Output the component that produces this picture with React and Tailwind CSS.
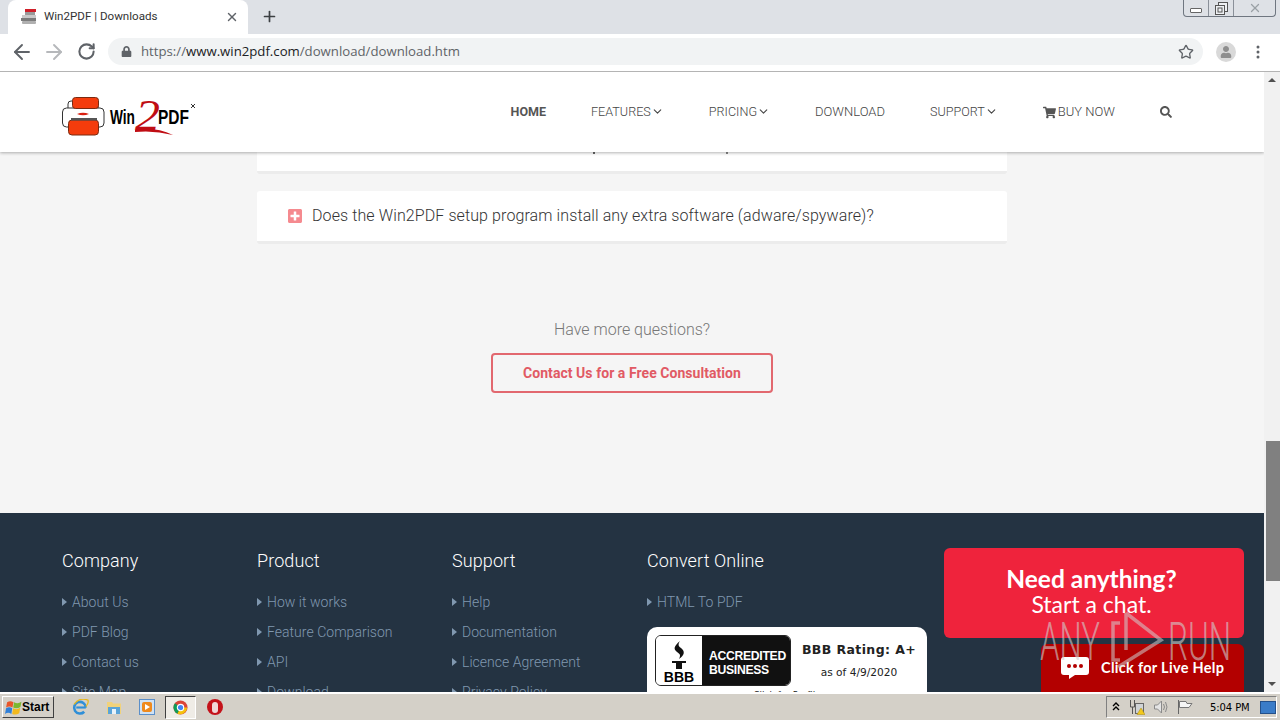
import { ArrowLeft, ArrowRight, RotateCw, Star, X, Plus, ChevronDown } from "lucide-react";
import { FaShoppingCart, FaSearch, FaPlusSquare, FaLock, FaUser } from "react-icons/fa";

const roboto = "font-['Roboto',sans-serif]";

const navItems = [
  { label: "HOME", active: true },
  { label: "FEATURES", caret: true },
  { label: "PRICING", caret: true },
  { label: "DOWNLOAD", wide: true },
  { label: "SUPPORT", caret: true },
];

const footerCols = [
  { title: "Company", links: ["About Us", "PDF Blog", "Contact us", "Site Map"] },
  { title: "Product", links: ["How it works", "Feature Comparison", "API", "Download"] },
  { title: "Support", links: ["Help", "Documentation", "Licence Agreement", "Privacy Policy"] },
];

const Logo = () => (
  <svg width="135" height="42" viewBox="0 0 135 42" className="shrink-0">
    {/* printer */}
    <rect x="6" y="4" width="30" height="20" rx="3" fill="#fff" stroke="#333" />
    <rect x="0.5" y="11" width="41.5" height="19" rx="4" fill="#fff" stroke="#333" />
    <rect x="10.5" y="0.5" width="26" height="11" rx="3" fill="#f43c0c" stroke="#7a2a10" />
    <rect x="6.5" y="23" width="30" height="15" rx="3.5" fill="#f43c0c" stroke="#7a2a10" />
    <rect x="9" y="21" width="26" height="2.5" fill="#555" />
    <path d="M15 17 Q21 14.5 27 17 Q21 19.5 15 17Z" fill="#d92010" />
    {/* wordmark */}
    <text x="48" y="27" textLength="25" lengthAdjust="spacingAndGlyphs" fontFamily="Liberation Sans" fontWeight="700" fontSize="19.5" fill="#000">Win</text>
    <text x="73" y="33" textLength="25" lengthAdjust="spacingAndGlyphs" fontFamily="Liberation Serif" fontStyle="italic" fontSize="44" fill="#c00d14">2</text>
    <path d="M73 33 Q92 29 111 38 Q92 33 73 35Z" fill="#c00d14" />
    <text x="96" y="27" textLength="31" lengthAdjust="spacingAndGlyphs" fontFamily="Liberation Sans" fontWeight="700" fontSize="19.5" fill="#000">PDF</text>
    <path d="M129 7 L133 11 M133 7 L129 11" stroke="#333" strokeWidth="1" />
  </svg>
);

const LinkCaret = () => (
  <span className="mr-[5px] border-y-[4px] border-l-[5px] border-y-transparent border-l-[#8098b0]" />
);

const FooterColumn = ({ title, links }) => (
  <div className="w-[195px] shrink-0">
    <h4 className="text-[18px] leading-[20px] font-light text-white tracking-[0.1px]">{title}</h4>
    <ul className="mt-[21px] flex flex-col gap-[10px]">
      {links.map((link) => (
        <li key={link} className="flex items-center h-[20px] text-[14px] font-light text-[#8098b0] tracking-[0.03px]">
          <LinkCaret />
          {link}
        </li>
      ))}
    </ul>
  </div>
);

export default function App() {
  return (
    <div className="relative w-[1280px] h-[720px] overflow-hidden flex flex-col bg-white">
      {/* TAB STRIP */}
      <div className="h-[34px] shrink-0 bg-[#dee1e6] flex items-end pl-[8px] relative">
        <div className="w-[240px] h-[34px] bg-white rounded-t-[8px] flex items-center pl-[13px] pr-[9px]">
          <svg width="16" height="16" viewBox="0 0 16 16" className="shrink-0">
            <rect x="4" y="0" width="11" height="3" fill="#d0202a" />
            <rect x="4" y="3" width="10" height="3" fill="#9a9a9a" />
            <rect x="1" y="6" width="14" height="3" fill="#c9c9c9" />
            <rect x="0" y="9" width="15" height="3" fill="#7c7c7c" />
            <rect x="1" y="12" width="14" height="3" rx="1" fill="#b0b0b0" />
          </svg>
          <span className="ml-[7px] text-[11.6px] text-[#333] font-['Roboto',sans-serif]">Win2PDF | Downloads</span>
          <X size={14} strokeWidth={2.4} className="ml-auto text-[#5f6368]" />
        </div>
        <Plus size={17} strokeWidth={2.4} className="ml-[13px] mb-[9px] text-[#3c4043]" />
        {/* window buttons */}
        <div className="absolute top-0 right-[4px] w-[93px] h-[17px] bg-[#dee1e6] border border-t-0 border-[#6f7680] rounded-b-[4px] flex">
          <div className="w-[25px] flex items-end justify-center pb-[3px] border-r border-[#8a9099]">
            <div className="w-[12px] h-[5px] border border-[#666] rounded-[1px] bg-white" />
          </div>
          <div className="w-[25px] flex items-center justify-center border-r border-[#8a9099]">
            <svg width="13" height="13" viewBox="0 0 13 13">
              <rect x="3.5" y="0.5" width="9" height="9" fill="#eef0f3" stroke="#555" />
              <rect x="0.5" y="3.5" width="9" height="9" fill="#eef0f3" stroke="#555" />
              <rect x="3" y="6" width="4" height="4" fill="none" stroke="#555" />
            </svg>
          </div>
          <div className="flex-1 flex items-center justify-center">
            <X size={14} strokeWidth={2.2} className="text-[#9aa0a6]" />
          </div>
        </div>
      </div>

      {/* TOOLBAR */}
      <div className="h-[38px] shrink-0 bg-white border-b border-[#b4b4b4] flex items-center pl-[10px] pb-[2px]">
        <ArrowLeft size={24} strokeWidth={1.9} className="text-[#5f6368]" />
        <ArrowRight size={24} strokeWidth={1.9} className="ml-[8px] text-[#b6b8bb]" />
        <RotateCw size={19} strokeWidth={2.6} className="ml-[11px] text-[#5f6368]" />
        <div className="ml-[12px] w-[1095px] h-[27px] rounded-full bg-[#f1f3f4] flex items-center pl-[13px] pr-[9px]">
          <FaLock size={11} className="text-[#5f6368]" />
          <span className="ml-[9px] text-[13.2px] text-[#5f6368] font-['Open_Sans',sans-serif]">
            https://<span className="text-[#202124]">www.win2pdf.com</span>/download/download.htm
          </span>
          <Star size={16} strokeWidth={2} className="ml-auto text-[#5f6368]" />
        </div>
        <div className="ml-[13px] w-[20px] h-[20px] rounded-full bg-[#d9d9d9] flex items-center justify-center overflow-hidden">
          <FaUser size={12} className="text-[#8e8e8e]" />
        </div>
        <svg width="4" height="14" viewBox="0 0 4 14" className="ml-[20px] text-[#5f6368]">
          <circle cx="2" cy="2" r="1.5" fill="currentColor" />
          <circle cx="2" cy="7" r="1.5" fill="currentColor" />
          <circle cx="2" cy="12" r="1.5" fill="currentColor" />
        </svg>
      </div>

      {/* VIEWPORT */}
      <div className="flex-1 min-h-0 flex">
        <div className={`w-[1264px] flex flex-col overflow-hidden bg-[#f5f5f5] ${roboto}`}>
          {/* SITE HEADER */}
          <header className="relative z-10 h-[80px] shrink-0 bg-white shadow-[0_1px_3px_rgba(0,0,0,0.3)] flex items-center pl-[62px] pt-[12px]">
            <Logo />
            <nav className="ml-auto mr-[92px] -mt-[12px] flex items-center gap-[45px] text-[12.6px] font-light text-[#444]">
              {navItems.map((item) => (
                <span
                  key={item.label}
                  className={`flex items-center ${item.active ? "font-bold text-[12.5px] text-[#555]" : ""} ${item.wide ? "text-[13px]" : ""}`}
                >
                  {item.label}
                  {item.caret && <ChevronDown size={13} strokeWidth={2} />}
                </span>
              ))}
              <span className="flex items-center text-[13px]">
                <FaShoppingCart size={13} className="mr-[2px] text-[#555]" />
                BUY NOW
              </span>
              <FaSearch size={12} className="text-[#555]" />
            </nav>
          </header>

          {/* FAQ */}
          <main className="h-[361px] shrink-0 flex flex-col items-center">
            <div className="w-[750px] h-[22px] shrink-0 bg-white border-b-[3px] border-[#ececec] rounded-b-[3px] flex items-start">
              <span className="ml-[336px] w-[2px] h-[2px] bg-[#666]" />
              <span className="ml-[131px] w-[2px] h-[2px] bg-[#888]" />
            </div>
            <div className="mt-[17px] w-[750px] h-[53px] shrink-0 bg-white border-b-[3px] border-[#ececec] rounded-[3px] flex items-center pl-[30px]">
              <FaPlusSquare size={16} className="text-[#f58a8f]" />
              <span className="ml-[9px] text-[16px] font-light text-[#333] tracking-[0.1px]">
                Does the Win2PDF setup program install any extra software (adware/spyware)?
              </span>
            </div>
            <p className="mt-[76px] text-[16px] leading-[20px] font-light text-[#777]">Have more questions?</p>
            <button className="mt-[13px] w-[282px] h-[40px] border-2 border-[#e2686f] rounded-[4px] text-[14px] font-bold text-[#e15a64] tracking-[0.05px]">
              Contact Us for a Free Consultation
            </button>
          </main>

          {/* FOOTER */}
          <footer className="flex-1 min-h-0 bg-[#243342] overflow-hidden flex pl-[62px] pt-[38px]">
            {footerCols.map((col) => (
              <FooterColumn key={col.title} {...col} />
            ))}
            <div className="w-[280px] shrink-0">
              <h4 className="text-[18px] leading-[20px] font-light text-white tracking-[0.1px]">Convert Online</h4>
              <div className="mt-[21px] flex items-center h-[20px] text-[14px] font-light text-[#8098b0] tracking-[0.03px]">
                <LinkCaret />
                HTML To PDF
              </div>
              <div className="mt-[15px] h-[100px] bg-white rounded-[10px] px-[8px] pt-[8px] flex flex-col">
                <div className="flex items-start">
                  <div className="w-[136px] h-[51px] flex rounded-[6px] overflow-hidden border border-[#222] shrink-0">
                    <div className="w-[46px] bg-white flex flex-col items-center justify-end pb-[1px]">
                      <svg width="20" height="30" viewBox="0 0 20 30">
                        <path d="M11 1 C5 6 4 9 8 12 C11 14 12 15 10 19 C16 15 16 11 12 8 C9 6 9 4 11 1Z" fill="#111" />
                        <rect x="3" y="21" width="14" height="2" fill="#111" />
                        <rect x="7" y="23" width="6" height="6" fill="#111" />
                      </svg>
                      <span className="text-[14px] leading-[14px] font-bold text-black font-['Liberation_Sans',sans-serif]">BBB</span>
                    </div>
                    <div className="flex-1 bg-[#111] text-white text-[12.2px] leading-[14px] font-bold font-['Liberation_Sans',sans-serif] flex flex-col justify-center pl-[7px] pt-[4px] tracking-[-0.3px]">
                      <span>ACCREDITED</span>
                      <span>BUSINESS</span>
                    </div>
                  </div>
                  <div className="flex-1 flex flex-col items-center font-['DejaVu_Sans',sans-serif] text-[#222] pt-[7px] pl-[8px]">
                    <span className="text-[12.5px] leading-[15px] font-bold tracking-[0.4px]">BBB Rating: A+</span>
                    <span className="mt-[8px] text-[10.6px] leading-[15px]">as of 4/9/2020</span>
                  </div>
                </div>
                <span className="mt-[3px] text-center text-[9px] leading-[13px] text-[#222] font-['DejaVu_Sans',sans-serif]">Click for Profile</span>
              </div>
            </div>
          </footer>
        </div>

        {/* SCROLLBAR */}
        <div className="w-[16px] bg-[#f1f1f1] flex flex-col items-center">
          <span className="mt-[6px] border-x-[4px] border-b-[4px] border-x-transparent border-b-[#505050]" />
          <div className="mt-[359px] ml-[2px] w-[14px] h-[140px] bg-[#808080]" />
          <span className="mt-auto mb-[6px] border-x-[4px] border-t-[4px] border-x-transparent border-t-[#505050]" />
        </div>
      </div>

      {/* TASKBAR */}
      <div className="h-[28px] shrink-0 bg-[#d4d0c8] border-t-2 border-white flex items-center font-['DejaVu_Sans',sans-serif]">
        <div className="ml-[2px] w-[52px] h-[22px] bg-[#d4d0c8] border border-t-white border-l-white border-r-[#404040] border-b-[#404040] flex items-center pl-[2px]">
          <svg width="17" height="17" viewBox="0 0 16 16">
            <path d="M2 3 Q5 1 8 3 L7 8 Q4 6 1 8Z" fill="#e8562a" />
            <path d="M8.6 3 Q12 5 15.5 2.5 L14.5 7.5 Q11 9.5 7.7 8Z" fill="#7cb82f" />
            <path d="M1 8.7 Q4 7 6.8 8.7 L6 14 Q3 12 0 14Z" fill="#2f7fd8" />
            <path d="M7.6 8.8 Q11 10.5 14.3 8.3 L13.4 13.5 Q10 15.5 6.8 14Z" fill="#f2b91d" />
          </svg>
          <span className="text-[12px] font-bold text-black font-['Liberation_Sans',sans-serif]">Start</span>
        </div>
        <div className="ml-[18px] flex items-center gap-[17px]">
          <svg width="17" height="17" viewBox="0 0 16 16">
            <path d="M13 8 A5.5 5.5 0 1 0 11.5 12" fill="none" stroke="#2f8fd8" strokeWidth="2.4" />
            <rect x="4" y="7" width="9" height="2" fill="#2f8fd8" />
            <path d="M2 5 Q7 -2 15 1 Q16 4 13 7" fill="none" stroke="#e8b81d" strokeWidth="1.2" />
          </svg>
          <svg width="16" height="16" viewBox="0 0 16 16">
            <path d="M1 3 H6 L7 4.5 H15 V15 H1Z" fill="#f1d27a" />
            <rect x="2" y="8" width="12" height="7" fill="#5aa4d8" />
            <rect x="6" y="10" width="4" height="5" fill="#e8f2fa" />
          </svg>
          <svg width="16" height="16" viewBox="0 0 16 16">
            <rect x="0.5" y="0.5" width="15" height="15" fill="#cfe2f5" stroke="#5b8fc9" />
            <rect x="3" y="3" width="10" height="10" rx="2" fill="#ef8a1d" />
            <path d="M6 5 L11 8 L6 11Z" fill="#fff" />
          </svg>
        </div>
        <div className="ml-[10px] w-[31px] h-[23px] bg-[#efece6] border border-t-[#404040] border-l-[#404040] border-r-white border-b-white flex items-center justify-center">
          <svg width="15" height="15" viewBox="0 0 16 16">
            <circle cx="8" cy="8" r="7.5" fill="#db4437" />
            <path d="M8 8 L15 8 A7.5 7.5 0 0 1 4.5 14.6Z" fill="#f4c20d" />
            <path d="M8 8 L4.5 14.6 A7.5 7.5 0 0 1 2 3.5Z" fill="#0f9d58" />
            <circle cx="8" cy="8" r="3.4" fill="#4285f4" stroke="#fff" strokeWidth="1.2" />
          </svg>
        </div>
        <div className="ml-[11px] w-[16px] h-[16px] rounded-full bg-[#c4121a] flex items-center justify-center">
          <span className="w-[6px] h-[11px] rounded-full bg-[#f0d8d8]" />
        </div>

        {/* tray */}
        <div className="ml-auto mr-[3px] w-[171px] h-[22px] border border-t-[#808080] border-l-[#808080] border-r-white border-b-white flex items-center pl-[5px]">
          <svg width="8" height="10" viewBox="0 0 8 10">
            <path d="M1 4 L4 1 L7 4 M1 8 L4 5 L7 8" fill="none" stroke="#000" strokeWidth="1.4" />
          </svg>
          <svg width="16" height="16" viewBox="0 0 16 16" className="ml-[9px]">
            <path d="M1.5 1 V8 H5.5 V1 M3.5 8 V15" fill="none" stroke="#555" />
            <rect x="6.5" y="4.5" width="8" height="10" fill="#cfd3d6" stroke="#666" />
            <path d="M8 15.5 L12 9 L16 15.5Z" fill="#f2c81d" stroke="#a88a10" strokeWidth="0.5" />
          </svg>
          <svg width="16" height="16" viewBox="0 0 16 16" className="ml-[8px]">
            <path d="M1.5 6 H4.5 L8.5 2 V14 L4.5 10 H1.5Z" fill="#e4e4e4" stroke="#8a8a8a" />
            <path d="M10.5 5 Q12.5 8 10.5 11 M12.5 3 Q15.5 8 12.5 13" fill="none" stroke="#8a8a8a" />
          </svg>
          <svg width="16" height="16" viewBox="0 0 16 16" className="ml-[8px]">
            <path d="M1.5 1 V15" stroke="#666" />
            <path d="M2.5 2.5 H9 L10 4.5 H15 L12 8.5 H2.5Z" fill="#f5f5f5" stroke="#777" />
          </svg>
          <span className="ml-[17px] text-[10px] tracking-[-0.1px] text-black">5:04 PM</span>
          <div className="ml-auto w-[16px] h-[13px] bg-[#3a7cc8] border border-[#24508a]" />
        </div>
      </div>

      {/* LIVE CHAT WIDGET */}
      <div className="absolute left-[944px] top-[548px] w-[300px] h-[90px] bg-[#ef233c] rounded-[6px] flex flex-col items-center pt-[17px] pr-[5px] text-white font-['Lato',sans-serif]">
        <span className="text-[24.5px] leading-[28px] font-bold">Need anything?</span>
        <span className="text-[23px] leading-[26px] -mt-[2px]">Start a chat.</span>
      </div>
      <div className="absolute left-[1041px] top-[644px] w-[203px] h-[48px] bg-[#b30000] rounded-t-[6px] flex items-center pl-[20px] text-white font-['Lato',sans-serif]">
        <svg width="28" height="22" viewBox="0 0 28 22">
          <path d="M3 0 H25 Q28 0 28 3 V15 Q28 18 25 18 H14 L8 22 V18 H3 Q0 18 0 15 V3 Q0 0 3 0Z" fill="#fff" />
          <circle cx="8" cy="9" r="2" fill="#b30000" />
          <circle cx="14" cy="9" r="2" fill="#b30000" />
          <circle cx="20" cy="9" r="2" fill="#b30000" />
        </svg>
        <span className="ml-[12px] text-[14.5px] font-bold tracking-[0.3px]">Click for Live Help</span>
      </div>

      {/* ANY.RUN WATERMARK */}
      <svg width="200" height="62" viewBox="0 0 200 62" className="absolute left-[1039px] top-[610px] pointer-events-none">
        <text x="1" y="50" textLength="60" lengthAdjust="spacingAndGlyphs" fontFamily="Roboto" fontWeight="300" fontSize="53" fill="#cfcfcf" fillOpacity="0.6">ANY</text>
        <path d="M81 13 H74 V50 H81 M87 3 L122 30 L79 57 M87 3 V40" fill="none" stroke="#cfcfcf" strokeOpacity="0.55" strokeWidth="3.5" />
        <text x="129" y="50" textLength="63" lengthAdjust="spacingAndGlyphs" fontFamily="Roboto" fontWeight="300" fontSize="53" fill="#cfcfcf" fillOpacity="0.6">RUN</text>
      </svg>
    </div>
  );
}
